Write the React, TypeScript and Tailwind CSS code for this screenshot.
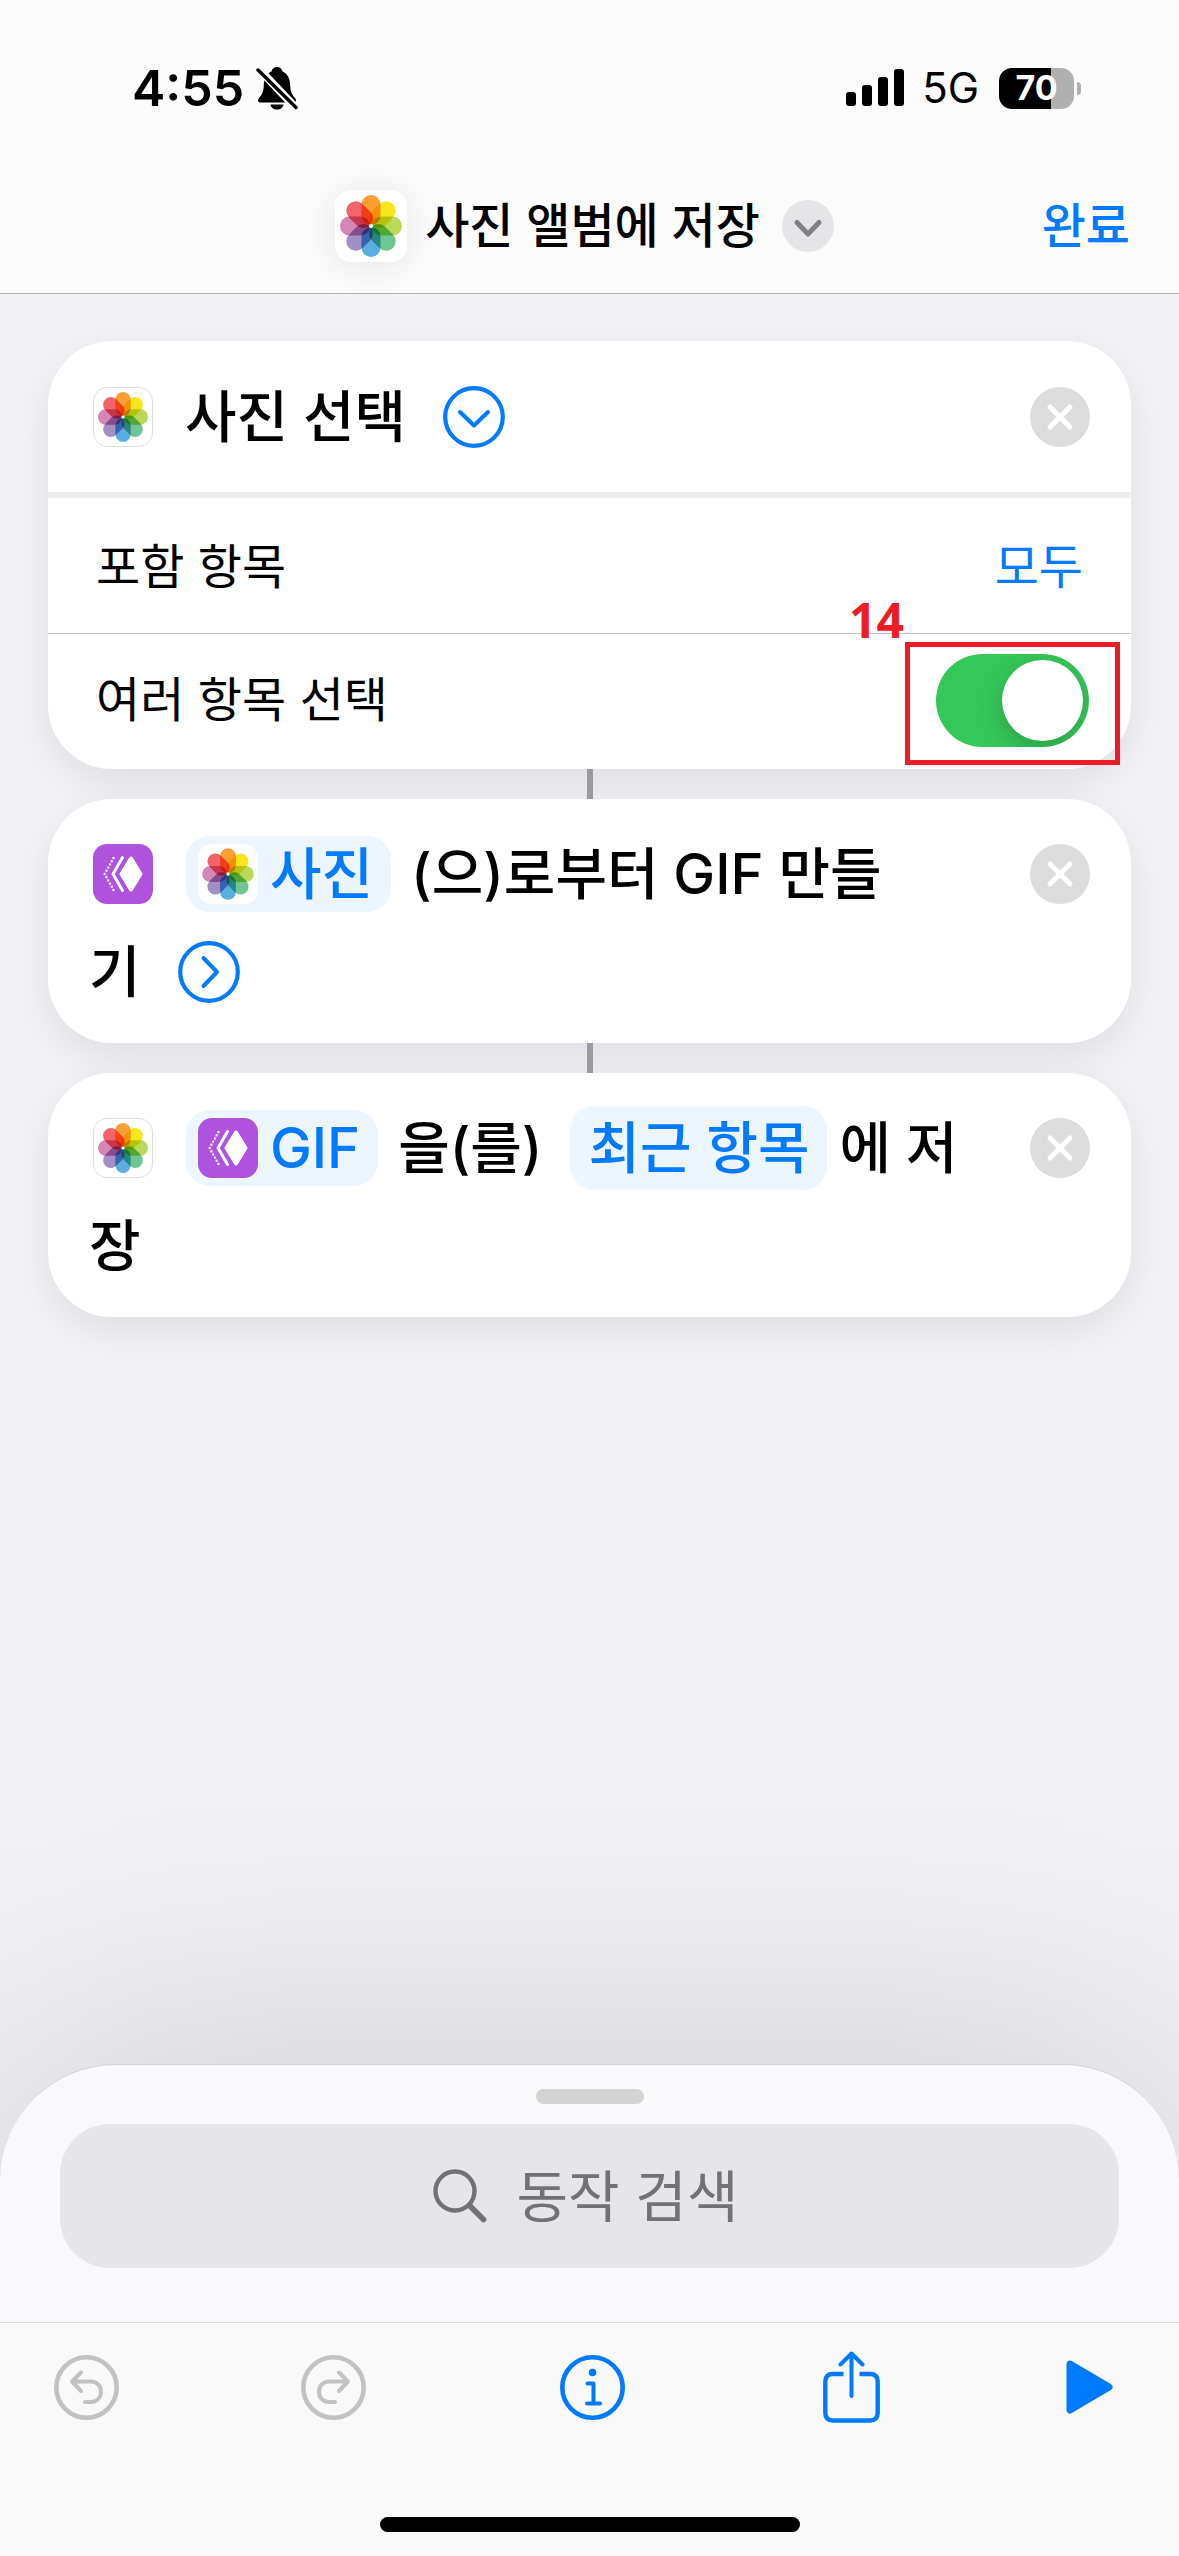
import { useState } from 'react';
import type { ReactNode } from 'react';

const PETALS = [
  { angle: 0, color: '#fb9f33' },
  { angle: 45, color: '#f9e51d' },
  { angle: 90, color: '#b9d957' },
  { angle: 135, color: '#70c594' },
  { angle: 180, color: '#5aaee0' },
  { angle: 225, color: '#a18fc6' },
  { angle: 270, color: '#d486b4' },
  { angle: 315, color: '#f2646b' },
];

const PhotosIcon = ({ className }: { className: string }) => (
  <svg viewBox="0 0 72 72" className={`isolate shrink-0 bg-white ${className}`} aria-hidden="true">
    {PETALS.map((petal) => (
      <rect
        key={petal.angle}
        x="26.5"
        y="5"
        width="19"
        height="30"
        rx="9.5"
        fill={petal.color}
        transform={`rotate(${petal.angle} 36 36)`}
        className="mix-blend-multiply"
      />
    ))}
    <circle cx="36" cy="36" r="2" fill="#fff" />
  </svg>
);

const GifIcon = () => (
  <svg viewBox="0 0 60 60" className="size-[60px] shrink-0 rounded-[14px] bg-[#af52de]" fill="none" aria-hidden="true">
    <path
      d="M38 14.5 L47.5 30 L38 45.5 L28.5 30 Z"
      fill="#fff"
      stroke="#fff"
      strokeWidth="4"
      strokeLinejoin="round"
    />
    <path d="M29.5 13.5 L20 30 L29.5 46.5" stroke="#fff" strokeWidth="3" strokeLinecap="round" strokeLinejoin="round" />
    <path
      d="M20.5 14 L11.7 30 L20.5 46"
      stroke="#fff"
      strokeWidth="2.4"
      strokeLinecap="round"
      strokeDasharray="0 3.65"
    />
  </svg>
);

const CircleChevron = ({ direction, label }: { direction: 'down' | 'right'; label: string }) => (
  <button aria-label={label} className="shrink-0">
    <svg viewBox="0 0 62 62" className="size-[62px]" fill="none" stroke="#007aff" strokeLinecap="round" strokeLinejoin="round">
      <circle cx="31" cy="31" r="28.8" strokeWidth="4.2" />
      <path d={direction === 'down' ? 'M17 26 L31 39.5 L45 26' : 'M25.5 17 L39 31 L25.5 45'} strokeWidth="4" />
    </svg>
  </button>
);

const CloseButton = () => (
  <button aria-label="삭제" className="shrink-0">
    <svg viewBox="0 0 60 60" className="size-[60px]" fill="none">
      <circle cx="30" cy="30" r="30" fill="#dddddd" />
      <path d="M20 20 L40 40 M40 20 L20 40" stroke="#fff" strokeWidth="5" strokeLinecap="round" />
    </svg>
  </button>
);

const StatusBar = () => (
  <div className="flex h-[56px] items-center justify-between pr-[98px] pl-[132px]">
    <div className="flex items-center gap-3">
      <span className="text-[50px] font-semibold">4:55</span>
      <svg viewBox="0 0 42 44" className="h-[44px] w-[42px]" aria-hidden="true">
        <path
          d="M21 1 C18 1 16 3 15.5 5.5 C10 8 8 13 7.8 19 C7.6 26 6 28.5 3 32 C1 35 2 36.5 5 36.5 H37 C40 36.5 41 35 39 32 C36 28.5 34.4 26 34.2 19 C34 13 32 8 26.5 5.5 C26 3 24 1 21 1 Z"
          fill="#000"
        />
        <path d="M14.5 38.5 H27.5 C27 42 24.5 43.5 21 43.5 C17.5 43.5 15 42 14.5 38.5 Z" fill="#000" />
        <path d="M1 1 L41 43" stroke="#fcfcfd" strokeWidth="8" />
        <path d="M2 4 L40 41.5" stroke="#000" strokeWidth="3.4" strokeLinecap="round" />
      </svg>
    </div>
    <div className="flex items-center">
      <svg viewBox="0 0 58 38" className="mr-[18px] h-[38px] w-[58px]" aria-hidden="true">
        <rect x="0" y="23" width="10" height="14" rx="3" />
        <rect x="16" y="16" width="10" height="21" rx="3" />
        <rect x="32" y="8" width="10" height="29" rx="3" />
        <rect x="48" y="0" width="10" height="37" rx="3" />
      </svg>
      <span className="mr-5 text-[42px]">5G</span>
      <div className="flex h-[41px] w-[75px] items-center justify-center rounded-[13px] bg-linear-to-r from-black from-70% to-[#b0b0b0] to-70% text-[34px] font-bold text-white">
        70
      </div>
      <div className="ml-[3px] h-[13px] w-1 rounded-r-full bg-[#b0b0b0]" />
    </div>
  </div>
);

const Card = ({ children }: { children: ReactNode }) => (
  <section className="rounded-[64px] bg-white shadow-[0_14px_40px_rgba(0,0,0,0.08)]">{children}</section>
);

const Connector = () => <div className="relative mx-auto h-[30px] w-[6px] bg-[#999ba2]" />;

const Chip = ({ children }: { children: ReactNode }) => (
  <button className="flex h-[76px] items-center gap-3 rounded-[24px] bg-[#edf5ff] pr-[18px] pl-3 text-[#007aff]">
    {children}
  </button>
);

const ActionCard = ({ first, second }: { first: ReactNode; second: ReactNode }) => (
  <Card>
    <div className="flex items-start justify-between pt-[26px] pr-[41px] pb-[22px] pl-[41px] text-[56px] font-medium">
      <div className="whitespace-nowrap">
        <div className="flex h-[98px] items-center pl-1">{first}</div>
        <div className="flex h-[98px] items-center gap-[37px]">{second}</div>
      </div>
      <div className="flex h-[98px] items-center">
        <CloseButton />
      </div>
    </div>
  </Card>
);

export default function App() {
  const [multiple, setMultiple] = useState(true);

  return (
    <div className="flex min-h-screen flex-col bg-[#f2f1f6] bg-[linear-gradient(to_right,rgba(242,241,246,0.5),rgba(242,241,246,0.16)_150px,rgba(242,241,246,0)_300px),linear-gradient(to_left,rgba(242,241,246,0.5),rgba(242,241,246,0.16)_150px,rgba(242,241,246,0)_300px),linear-gradient(to_top,#d4d3d7_376px,#dfdee3_492px,#e6e5ea_567px,#ecebf0_642px,#f0eff4_717px,#f2f1f6_812px)] font-[Inter,'Noto_Sans_CJK_KR',sans-serif] leading-none text-black">
      <header className="border-b border-[#b2b2b5] bg-[#fcfcfd] pt-[60px]">
        <StatusBar />
        <div className="mt-[74px] mb-[31px] grid grid-cols-[1fr_auto_1fr] items-center text-[48px] font-medium">
          <span />
          <button className="mr-[10px] flex items-center">
            <PhotosIcon className="size-[72px] rounded-[16px] shadow-[0_4px_40px_rgba(0,0,0,0.1)]" />
            <span className="ml-[18px]">사진 앨범에 저장</span>
            <svg viewBox="0 0 52 52" className="ml-[22px] size-[52px]" fill="none" aria-hidden="true">
              <circle cx="26" cy="26" r="26" fill="#e5e5e8" />
              <path d="M15 22.5 L26 34 L37 22.5" stroke="#808084" strokeWidth="5" strokeLinecap="round" strokeLinejoin="round" />
            </svg>
          </button>
          <button className="justify-self-end pr-[49px] text-[#007aff]">완료</button>
        </div>
      </header>

      <main className="flex-1 px-12 pt-[47px] pb-16">
        <Card>
          <div className="flex h-[151px] items-center pr-[41px] pl-[45px]">
            <PhotosIcon className="size-[60px] rounded-[14px] border border-[#dedede]" />
            <h2 className="mr-[37px] ml-8 text-[56px] font-medium">사진 선택</h2>
            <CircleChevron direction="down" label="옵션 접기" />
            <div className="ml-auto flex">
              <CloseButton />
            </div>
          </div>
          <div className="flex h-[141px] items-center justify-between border-t-[6px] border-[#eeeeee] px-12 pt-[3px] text-[48px]">
            <span>포함 항목</span>
            <button className="text-[#007aff]">모두</button>
          </div>
          <div className="flex h-[136px] items-center justify-between border-t border-[#c6c6c8] pr-[42px] pb-[3px] pl-12 text-[48px]">
            <label htmlFor="multiple">여러 항목 선택</label>
            <div className="relative flex">
              <input
                id="multiple"
                type="checkbox"
                checked={multiple}
                onChange={(e) => setMultiple(e.target.checked)}
                className="flex h-[93px] w-[153px] appearance-none items-center overflow-hidden rounded-full bg-[#e9e9ea] px-[6px] before:size-[81px] before:rounded-full before:bg-white before:shadow-[0_8px_24px_rgba(0,0,0,0.2)] checked:justify-end checked:bg-[#35c759]"
              />
              <div className="pointer-events-none absolute -inset-x-[31px] -top-3 -bottom-[18px] border-[5px] border-[#ee1c25]" />
              <span className="absolute right-full bottom-full mr-8 mb-[10px] font-['Noto_Sans',sans-serif] text-[48px] font-bold text-[#ee1c25]">
                14
              </span>
            </div>
          </div>
        </Card>

        <Connector />

        <ActionCard
          first={
            <>
              <GifIcon />
              <span className="w-[33px]" />
              <Chip>
                <PhotosIcon className="size-[60px] rounded-[14px]" />
                사진
              </Chip>
              <span className="ml-5">(으)로부터 GIF 만들</span>
            </>
          }
          second={
            <>
              <span>기</span>
              <CircleChevron direction="right" label="옵션 보기" />
            </>
          }
        />

        <Connector />

        <ActionCard
          first={
            <>
              <PhotosIcon className="size-[60px] rounded-[14px] border border-[#dedede]" />
              <span className="w-[33px]" />
              <Chip>
                <GifIcon />
                GIF
              </Chip>
              <span className="mr-7 ml-5">을(를)</span>
              <button className="h-[84px] rounded-[24px] bg-[#edf5ff] px-[18px] text-[#007aff]">최근 항목</button>
              <span className="ml-3">에 저</span>
            </>
          }
          second={<span>장</span>}
        />
      </main>

      <footer className="overflow-hidden rounded-t-[116px] border-t border-[#d2d2d6] bg-[#f9f9fb]">
        <div className="mx-auto mt-6 h-[15px] w-[108px] rounded-full bg-[#d3d3d3]" />
        <label className="mx-[60px] mt-5 mb-[54px] flex h-[144px] items-center justify-center gap-[30px] rounded-[50px] bg-[#e6e6e8] pr-2">
          <svg viewBox="0 0 54 54" className="size-[54px]" fill="none" stroke="#717177" strokeLinecap="round" aria-hidden="true">
            <circle cx="22" cy="22" r="19.5" strokeWidth="4.4" />
            <path d="M36.5 36.5 L50.5 50.5" strokeWidth="5.6" />
          </svg>
          <input
            type="search"
            aria-label="동작 검색"
            placeholder="동작 검색"
            className="field-sizing-content bg-transparent pb-2 text-[56px] outline-none placeholder:text-[#717177]"
          />
        </label>

        <nav className="flex items-center justify-between border-t border-[#dcdcdc] bg-[#f9f9f9] pt-[28px] pr-[66px] pb-[94px] pl-[54px]">
          <button aria-label="실행 취소" disabled>
            <svg viewBox="0 0 65 65" className="size-[65px]" fill="none" stroke="#c2c2c2" strokeLinecap="round" strokeLinejoin="round">
              <circle cx="32.5" cy="32.5" r="30.2" strokeWidth="4.6" />
              <path d="M27 17.5 L18 26.5 L27 36 M18.5 26.5 H36.5 C43 26.5 47 31 47 36.8 C47 42.6 43 47 36.5 47 H31" strokeWidth="4" />
            </svg>
          </button>
          <button aria-label="다시 실행" disabled>
            <svg viewBox="0 0 65 65" className="size-[65px]" fill="none" stroke="#c2c2c2" strokeLinecap="round" strokeLinejoin="round">
              <circle cx="32.5" cy="32.5" r="30.2" strokeWidth="4.6" />
              <path d="M38 17.5 L47 26.5 L38 36 M46.5 26.5 H28.5 C22 26.5 18 31 18 36.8 C18 42.6 22 47 28.5 47 H34" strokeWidth="4" />
            </svg>
          </button>
          <button aria-label="정보" className="mx-3">
            <svg viewBox="0 0 65 65" className="size-[65px]" fill="none" stroke="#007aff" strokeLinecap="round" strokeLinejoin="round">
              <circle cx="32.5" cy="32.5" r="30.2" strokeWidth="4.6" />
              <circle cx="32.5" cy="17.5" r="3.8" fill="#007aff" stroke="none" />
              <path d="M27.5 28.5 H33.5 V48.5 M27 48.5 H40" strokeWidth="4" />
            </svg>
          </button>
          <button aria-label="공유" className="mx-1">
            <svg viewBox="0 0 57 72" className="h-[72px] w-[57px]" fill="none" stroke="#007aff" strokeLinecap="round" strokeLinejoin="round">
              <path d="M20.5 23 H10 Q2.3 23 2.3 30.5 V61.5 Q2.3 69.5 10 69.5 H47 Q54.7 69.5 54.7 61.5 V30.5 Q54.7 23 47 23 H36.5" strokeWidth="4.4" strokeLinecap="butt" />
              <path d="M28.5 45 V2.5 M17.5 13.5 L28.5 2.5 L39.5 13.5" strokeWidth="4" />
            </svg>
          </button>
          <button aria-label="재생">
            <svg viewBox="0 0 47 54" className="h-[54px] w-[47px]" aria-hidden="true">
              <path d="M4 4 L43 27 L4 50 Z" fill="#007aff" stroke="#007aff" strokeWidth="7" strokeLinejoin="round" />
            </svg>
          </button>
        </nav>
        <div className="flex justify-center bg-[#f9f9f9] pb-6">
          <div className="h-[15px] w-[420px] rounded-full bg-black" />
        </div>
      </footer>
    </div>
  );
}
